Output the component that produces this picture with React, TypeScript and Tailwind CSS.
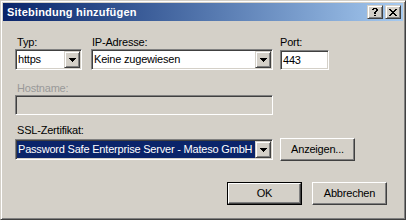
import React from 'react';

// classic 3D edges
const sunken =
  "border border-t-[#808080] border-l-[#808080] border-r-white border-b-white shadow-[inset_1px_1px_0_#404040,inset_-1px_-1px_0_#d4d0c8]";
const raisedSmall =
  "border border-t-[#d4d0c8] border-l-[#d4d0c8] border-r-[#404040] border-b-[#404040] shadow-[inset_1px_1px_0_#fff,inset_-1px_-1px_0_#808080] bg-[#d4d0c8]";
const raisedButton =
  "border border-t-white border-l-white border-r-[#404040] border-b-[#404040] shadow-[inset_-1px_-1px_0_#808080] bg-[#d4d0c8]";

const DropArrow = () => (
  <svg width="7" height="4" viewBox="0 0 7 4" shapeRendering="crispEdges">
    <path d="M0 0h7v1H0zM1 1h5v1H1zM2 2h3v1H2zM3 3h1v1H3z" fill="#000" />
  </svg>
);

const CloseGlyph = () => (
  <svg width="8" height="7" viewBox="0 0 8 7" shapeRendering="crispEdges">
    <path
      d="M0 0h2v1H0zM6 0h2v1H6zM1 1h2v1H1zM5 1h2v1H5zM2 2h4v1H2zM3 3h2v1H3zM2 4h4v1H2zM1 5h2v1H1zM5 5h2v1H5zM0 6h2v1H0zM6 6h2v1H6z"
      fill="#000"
    />
  </svg>
);

const HelpGlyph = () => (
  <svg width="6" height="8" viewBox="0 0 6 8" shapeRendering="crispEdges">
    <path
      d="M1 0h4v1H1zM0 1h2v1H0zM4 1h2v1H4zM4 2h2v1H4zM3 3h2v1H3zM2 4h2v1H2zM2 5h2v1H2zM2 7h2v1H2z"
      fill="#000"
    />
  </svg>
);

const Combo = ({
  value,
  width,
  selected = false,
}: {
  value: string;
  width: string;
  selected?: boolean;
}) => (
  <div className={`${width} h-[21px] bg-white p-[1px] flex ${sunken}`}>
    <div className="flex-1 flex items-center min-w-0">
      {selected ? (
        <div className="h-full w-full bg-[#0a246a] text-white flex items-center pl-[1px] whitespace-nowrap overflow-hidden">
          {value}
        </div>
      ) : (
        <span className="pl-[1px] whitespace-nowrap">{value}</span>
      )}
    </div>
    <div className={`w-[16px] h-full flex items-center justify-center ${raisedSmall}`}>
      <DropArrow />
    </div>
  </div>
);

const Label = ({ children, className = "" }: { children: React.ReactNode; className?: string }) => (
  <div className={`h-[13px] whitespace-nowrap ${className}`}>{children}</div>
);

export default function App() {
  return (
    <div className="w-[406px] h-[220px] bg-[#d4d0c8] border border-t-[#d4d0c8] border-l-[#d4d0c8] border-r-[#404040] border-b-[#404040] shadow-[inset_1px_1px_0_#fff,inset_-1px_-1px_0_#808080] p-[2px] flex flex-col font-['Liberation_Sans',Arial,sans-serif] text-[11px] leading-[13px] tracking-[-0.2px] text-black">
      {/* title bar */}
      <div className="h-[18px] shrink-0 flex items-center bg-linear-to-r from-[#0a246a] to-[#a6caf0] pl-[4px] pr-[2px]">
        <span className="text-white font-bold tracking-[0.2px] flex-1">Sitebindung hinzufügen</span>
        <div className="flex gap-[2px]">
          <div className={`w-[16px] h-[14px] flex items-center justify-center ${raisedSmall}`}>
            <HelpGlyph />
          </div>
          <div className={`w-[16px] h-[14px] flex items-center justify-center ${raisedSmall}`}>
            <CloseGlyph />
          </div>
        </div>
      </div>

      {/* client */}
      <div className="flex flex-col pl-[12px] pt-[15px]">
        <div className="flex">
          <div className="w-[67px] flex flex-col">
            <Label className="pl-[2px]">Typ:</Label>
            <Combo value="https" width="w-[67px]" />
          </div>
          <div className="w-[182px] ml-[9px] flex flex-col">
            <Label className="pl-[1px]">IP-Adresse:</Label>
            <Combo value="Keine zugewiesen" width="w-[182px]" />
          </div>
          <div className="w-[49px] ml-[7px] flex flex-col">
            <Label>Port:</Label>
            <div className={`mt-[1px] w-[49px] h-[20px] bg-white flex items-center pl-[2px] ${sunken}`}>443</div>
          </div>
        </div>

        <Label className="mt-[12px] pl-[2px] text-[#999999]">Hostname:</Label>
        <div className={`w-[258px] h-[20px] bg-[#d4d0c8] ${sunken}`} />

        <Label className="mt-[9px] pl-[2px]">SSL-Zertifikat:</Label>
        <div className="mt-[1px] h-[23px] flex items-center">
          <Combo value="Password Safe Enterprise Server - Mateso GmbH" width="w-[258px]" selected />
          <button className={`ml-[7px] w-[75px] h-[23px] flex items-center justify-center ${raisedButton}`}>
            Anzeigen...
          </button>
        </div>

        <div className="mt-[21px] flex justify-end gap-[10px] pr-[16px]">
          <div className="w-[75px] h-[23px] border border-black">
            <button className={`w-full h-full flex items-center justify-center ${raisedButton}`}>OK</button>
          </div>
          <button className={`w-[75px] h-[23px] flex items-center justify-center ${raisedButton}`}>
            Abbrechen
          </button>
        </div>
      </div>
    </div>
  );
}
